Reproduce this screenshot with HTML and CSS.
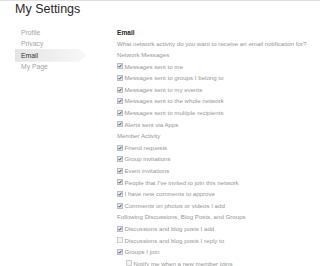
FILE: index.html
```html
<!DOCTYPE html>
<html lang="en">
	<head>
		<meta charset="utf-8">
		<title>My Settings</title>
		<link rel="stylesheet" href="styles.css">
	</head>
	<body>
		<h1 class="title">My Settings</h1>
		<div class="layout">
			<ul class="nav">
				<li><a href="#">Profile</a></li>
				<li><a href="#">Privacy</a></li>
				<li class="current"><a href="#">Email</a></li>
				<li><a href="#">My Page</a></li>
			</ul>
			<form class="prefs">
				<h2 class="prefs-title">Email</h2>
				<p class="prefs-intro">What network activity do you want to receive an email notification for?</p>

				<p class="group">Network Messages</p>
				<label class="opt"><span class="box on"></span>Messages sent to me</label>
				<label class="opt"><span class="box on"></span>Messages sent to groups I belong to</label>
				<label class="opt"><span class="box on"></span>Messages sent to my events</label>
				<label class="opt"><span class="box on"></span>Messages sent to the whole network</label>
				<label class="opt"><span class="box on"></span>Messages sent to multiple recipients</label>
				<label class="opt"><span class="box on"></span>Alerts sent via Apps</label>

				<p class="group">Member Activity</p>
				<label class="opt"><span class="box on"></span>Friend requests</label>
				<label class="opt"><span class="box on"></span>Group invitations</label>
				<label class="opt"><span class="box on"></span>Event invitations</label>
				<label class="opt"><span class="box on"></span>People that I've invited to join this network</label>
				<label class="opt"><span class="box on"></span>I have new comments to approve</label>
				<label class="opt"><span class="box on"></span>Comments on photos or videos I add</label>

				<p class="group">Following Discussions, Blog Posts, and Groups</p>
				<label class="opt"><span class="box on"></span>Discussions and blog posts I add</label>
				<label class="opt"><span class="box"></span>Discussions and blog posts I reply to</label>
				<label class="opt"><span class="box on"></span>Groups I join</label>
				<label class="opt sub"><span class="box"></span>Notify me when a new member joins</label>
			</form>
		</div>
	</body>
</html>
```

FILE: styles.css
```css
body {
	margin: 0;
	border-top: 1px solid rgb(225, 225, 225);
	background: #fff;
	font-family: "Liberation Sans", Arial, sans-serif;
	color: rgb(150, 150, 150);
	overflow: hidden;
}
h1.title {
	margin: 0;
	padding-left: 15px;
	font-size: 12.5px;
	font-weight: normal;
	line-height: 16px;
	color: rgb(40, 40, 40);
}
div.layout {
	display: flex;
	padding-top: 10px;
}
ul.nav {
	list-style: none;
	margin: 0 0 0 15px;
	padding: 0;
	width: 72px;
	flex-shrink: 0;
}
ul.nav li {
	height: 11.3px;
	line-height: 11.3px;
	font-size: 6.8px;
	padding-left: 6px;
}
ul.nav a {
	color: rgb(165, 165, 165);
	text-decoration: none;
}
ul.nav li.current {
	height: 13px;
	line-height: 13px;
	margin: -0.85px 0;
	background: linear-gradient(to right, rgb(228, 228, 228), rgb(248, 248, 248));
	clip-path: polygon(0 0, 88% 0, 100% 50%, 88% 100%, 0 100%);
}
ul.nav li.current a {
	color: rgb(50, 50, 50);
}
form.prefs {
	margin-left: 30px;
	padding-top: 1px;
	font-size: 6.15px;
}
h2.prefs-title {
	margin: 0;
	height: 10px;
	line-height: 10px;
	font-size: 6.6px;
	font-weight: bold;
	color: rgb(40, 40, 40);
}
p.prefs-intro {
	margin: 0;
	height: 11px;
	line-height: 11px;
}
p.group {
	margin: 0;
	height: 11.6px;
	line-height: 11.6px;
}
label.opt {
	display: flex;
	align-items: center;
	gap: 1.5px;
	height: 11.6px;
	line-height: 11.6px;
}
label.sub {
	padding-left: 9px;
}
span.box {
	width: 6px;
	height: 6px;
	flex-shrink: 0;
	background: url("data:image/svg+xml;utf8,<svg xmlns='http://www.w3.org/2000/svg' width='6' height='6'><rect x='0.5' y='0.5' width='5' height='5' fill='%23f2f2f2' stroke='%23cfcfcf'/></svg>");
}
span.box.on {
	background: url("data:image/svg+xml;utf8,<svg xmlns='http://www.w3.org/2000/svg' width='6' height='6'><rect x='0.5' y='0.5' width='5' height='5' fill='%23e8e8ee' stroke='%23bcbcc4'/><path d='M1.6 3 L2.6 4.2 L4.5 1.7' fill='none' stroke='%23344c88' stroke-width='1'/></svg>");
}
```
